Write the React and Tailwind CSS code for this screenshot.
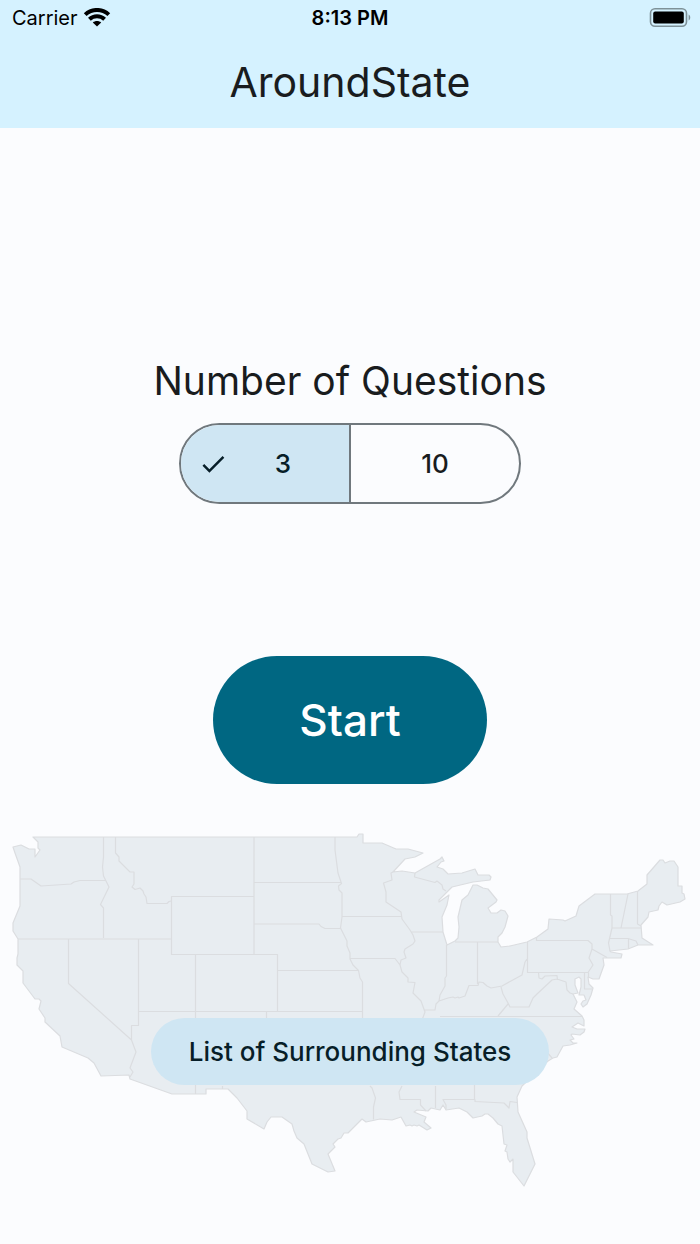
import { useState } from "react";

const COUNTRY =
  "M13 847L21 845L29 849L35 849L35 857L40 850L38 848L38 842L33 837L357 837L359 834L363 834L363 843L382 843L396 849L408 849L423 853L415 857L405 859L393 872L402 871L415 873L440 859L442 857L444 861L441 862L437 867L443 869L448 874L462 873L475 869L478 875L489 875L491 877L490 880L473 882L452 887L439 900L439 902L449 895L447 905L442 917L443 932L447 945L455 941L458 938L459 927L458 917L462 900L468 895L473 885L477 885L483 888L488 889L497 900L496 902L488 908L491 913L497 913L501 910L505 911L508 916L505 927L502 933L498 937L498 942L501 947L510 946L527 942L537 937L548 929L549 919L563 920L565 921L576 916L579 906L595 894L627 894L638 891L647 884L647 875L660 860L663 860L665 863L670 861L674 861L678 867L678 886L682 886L682 893L684 894L685 899L680 902L667 905L662 902L659 906L658 910L649 912L648 917L641 925L642 938L653 945L638 945L628 949L610 951L611 952L622 954L621 958L603 958L604 965L599 979L593 979L588 977L589 984L593 988L591 995L587 1004L583 1007L581 1004L583 1001L586 1000L584 995L579 995L581 987L581 979L579 977L575 979L575 985L578 993L573 994L577 1002L574 1009L582 1016L584 1020L584 1026L578 1023L572 1027L577 1029L585 1029L584 1032L580 1035L572 1034L571 1035L574 1039L570 1040L573 1043L577 1043L570 1045L563 1046L557 1057L553 1058L548 1061L522 1086L517 1097L518 1112L527 1132L527 1138L535 1164L524 1186L513 1172L513 1159L510 1162L508 1159L507 1152L505 1151L507 1145L504 1144L502 1126L498 1124L493 1118L488 1114L485 1114L482 1116L473 1118L467 1112L459 1108L446 1110L443 1105L440 1110L431 1108L428 1111L417 1110L414 1112L426 1117L424 1122L431 1128L427 1130L419 1125L417 1126L414 1125L412 1126L410 1125L406 1126L401 1117L392 1120L380 1119L366 1122L362 1119L348 1133L344 1133L341 1138L338 1139L333 1144L335 1147L328 1154L335 1171L328 1172L312 1164L304 1144L297 1138L294 1131L292 1124L282 1117L271 1117L267 1122L264 1129L247 1119L247 1111L237 1098L228 1089L206 1089L206 1094L172 1094L130 1079L129 1075L101 1076L94 1063L88 1058L62 1047L60 1036L45 1022L45 1018L39 1009L41 1001L39 999L35 999L23 983L23 971L17 965L17 958L18 954L18 939L13 931L13 923L20 906L20 867L15 853Z";

const BORDERS = [
  "M20 879L31 879L41 886L71 884L74 882L80 880.5L106 880.5",
  "M103.5 837L103.5 857L102.5 867L103.5 876L109 887L100.5 904.5L103.5 908L103.5 938",
  "M115.5 837L115.5 853L119 857L119 861L130 872L134 872L134 884L132 887L135 889.5L140 888L143 891L144 894L146 897L147 903.5L167 903.5L169 901.5L171 901",
  "M254 896.5L171.5 896.5L171.5 954.5L277.5 954.5L277.5 1011",
  "M254 837L254 954.5",
  "M18 939L171 939",
  "M68.5 939L68.5 983.5L131.5 1040L136 1052L130 1068L133 1072L130 1077",
  "M138.5 939L138.5 1025.5L131.5 1025.5L131.5 1040",
  "M138.5 1011.5L362.5 1011.5",
  "M195.5 954.5L195.5 1094",
  "M222.5 1086L222.5 1089M266.5 1011.5L266.5 1020",
  "M277.5 970.5L359 970.5",
  "M254 882.5L341 882.5",
  "M335 837L335 850L338 873L341.5 883.5L338.5 886L339 890L342 893L342 917L340.5 928L347 941L347 946L350 953L350 959L353 965L358.5 970.5L360 978L362.5 982L362.5 1020",
  "M254 924L319 924L321 926.5L325 928.5L340.5 928.5",
  "M342 916.5L402 916.5",
  "M350 958.5L395 958.5L400 965",
  "M393 872L391 873L392 880L383.5 883L386 892L386 902L401 912L402 919L410 930L413 935L415 941L413 944L405 949L404 952L406 958L401 960L400 965L402 972L408 978L408 982L415 982.5L413 993L421 1001L425 1012L422 1020",
  "M411 932L443 932",
  "M415 873L414.5 877L435 882.5L437 881L442 885L443 889L446 891",
  "M455 942L498 942",
  "M446.5 945L446.5 976L445 978L445 986L440 995L439 1001L436 1004L435 1010L424.5 1010",
  "M477.5 942L477.5 984",
  "M439 1001L448 998L453 997L455 998L458 997L459 998L465 996L469 985.5L478 985.5L479 982L483 982.5L487 986L491 988L502 986L511 981L522 975L525 962L527 959",
  "M527.5 942L527.5 972.5L588 972.5",
  "M501 987L503 994L508 1003L510 1007L529 1007L533 998L537 994L552 980L557 979L566 982L567 990L570 993L573 994",
  "M508 1004L498 1016M440 1016.5L582 1016.5",
  "M538.5 972.5L539 978L542 979L545 976L557 975.5L557.5 980",
  "M584.5 972.5L584.5 989L592 989M588.5 972.5L588.5 978",
  "M536.5 937L536.5 940.5L588 940.5L592 944L592 949L589 958L593 965L588 972.5",
  "M592 949L607 957.5",
  "M610.5 894L610.5 915L612 916L612 928L608.5 943L610 951",
  "M628 894L621 928",
  "M637.5 891L637.5 924L641 926",
  "M612 928L641 928M609 938.5L628 938.5L636 941L638 945M628.5 938.5L628.5 949",
  "M370 1086L372 1088L375.5 1098L373.5 1107L373.5 1119.5",
  "M402 1086L399 1092L400 1099.5L420.5 1099.5L420.5 1105L426 1111",
  "M435.5 1086L435.5 1108",
  "M446 1109L446 1105L443 1099.5L475 1099.5L475 1101.5L504 1103L509 1108L510 1101.5L517 1102.5",
  "M474.5 1084L474.5 1099.5",
  "M546 1051L552 1058",
];

function StatusBar() {
  return (
    <div className="grid grid-cols-3 items-center px-3 pt-1 text-xl text-black">
      <div className="flex items-center gap-[5px]">
        <span className="leading-7">Carrier</span>
        <svg className="h-5 w-7" viewBox="0 0 28 20" aria-hidden="true">
          <g fill="none" stroke="#000" strokeWidth="4">
            <path d="M2.2 6.6C8.8 0.4 19.2 0.4 25.8 6.6" />
            <path d="M6.4 11.2C10.7 7.2 17.3 7.2 21.6 11.2" />
          </g>
          <path d="M14 18.6L9.8 14.6C12.2 12.6 15.8 12.6 18.2 14.6Z" />
        </svg>
      </div>
      <span className="text-center leading-7 font-semibold">8:13 PM</span>
      <svg className="-mr-1 h-5 w-11 justify-self-end" viewBox="0 0 44 20" aria-hidden="true">
        <rect x="2.5" y="0.8" width="36" height="17.5" rx="4.5" fill="none" stroke="#7e9198" strokeWidth="1.6" />
        <rect x="5.2" y="3.4" width="30.6" height="12" rx="2" fill="#000" />
        <path d="M40.6 6.4C42.8 7.6 42.8 11.2 40.6 12.4Z" fill="#7e9198" />
      </svg>
    </div>
  );
}

function Segment({ value, checked, onSelect }) {
  return (
    <label className="flex flex-1 cursor-pointer items-center border-[#70787d] px-4 text-[#191c1e] first:border-r-2 has-checked:bg-[#cfe6f3] has-checked:text-[#071e28]">
      <input
        className="sr-only"
        type="radio"
        name="questions"
        value={value}
        checked={checked}
        onChange={() => onSelect(value)}
      />
      {checked && (
        <svg className="size-9" viewBox="-1 -2.5 29 29" fill="currentColor" aria-hidden="true">
          <path d="M9 16.17L4.83 12l-1.42 1.41L9 19 21 7l-1.41-1.41z" />
        </svg>
      )}
      <span className="flex-1 text-center text-[26px] font-medium">{value}</span>
    </label>
  );
}

function StatesMap() {
  return (
    <svg className="block w-full" viewBox="0 832 700 356" aria-hidden="true">
      <g stroke="#dbdde0" strokeWidth="1.2" strokeLinejoin="round">
        <path d={COUNTRY} fill="#e8edf1" />
        <path d={BORDERS.join("")} fill="none" />
      </g>
    </svg>
  );
}

export default function App() {
  const [count, setCount] = useState(3);

  return (
    <div className="flex min-h-screen flex-col bg-[#fbfcfe] font-['Inter',sans-serif]">
      <header className="bg-[#d5f2ff] pb-[18px]">
        <StatusBar />
        <h1 className="pt-[22px] text-center text-[41px] leading-[56px] text-[#191c1e]">AroundState</h1>
      </header>
      <main className="flex flex-1 flex-col items-center pt-[225px]">
        <fieldset className="flex flex-col items-center">
          <legend className="pb-[14px] text-center text-[39px] leading-[56px] text-[#191c1e]">
            Number of Questions
          </legend>
          <div className="flex h-[81px] w-[342px] overflow-hidden rounded-full border-2 border-[#70787d]">
            {[3, 10].map((n) => (
              <Segment key={n} value={n} checked={count === n} onSelect={setCount} />
            ))}
          </div>
        </fieldset>
        <button
          type="button"
          className="mt-[152px] h-32 w-[274px] cursor-pointer rounded-full bg-[#006782] text-[44px] font-medium text-white"
        >
          Start
        </button>
        <div className="relative mt-12 w-full pb-14">
          <StatesMap />
          <button
            type="button"
            className="absolute bottom-[159px] left-1/2 h-[67px] w-[398px] -translate-x-1/2 cursor-pointer rounded-full bg-[#cfe6f3] text-[26px] font-medium text-[#071e28]"
          >
            List of Surrounding States
          </button>
        </div>
      </main>
    </div>
  );
}
